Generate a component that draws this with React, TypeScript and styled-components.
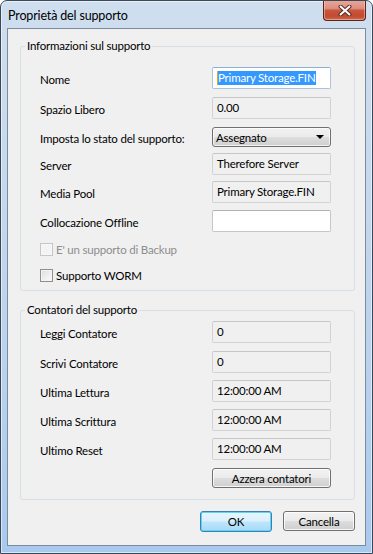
import React from "react";
import styled, { createGlobalStyle } from "styled-components";

const Global = createGlobalStyle`
  html, body { margin: 0; padding: 0; background: #ffffff; }
  body { font-family: Lato, "Open Sans", sans-serif; }
  * { box-sizing: border-box; }
`;

const Window = styled.div`
  width: 373px;
  height: 554px;
  border: 1px solid #3a4756;
  border-radius: 7px 7px 0 0;
  background: linear-gradient(to bottom, #cfdeef 0%, #c3d7ed 40%, #b3cfee 80%, #a8c9ee 100%);
  box-shadow: inset 0 0 0 1px rgba(255, 255, 255, 0.55);
  display: flex;
  flex-direction: column;
  padding: 0 6px 7px 6px;
  font-family: Lato, "Open Sans", sans-serif;
  font-size: 11.5px;
  letter-spacing: -0.2px;
  color: #000;
  overflow: hidden;
`;

const TitleBar = styled.div`
  height: 27px;
  display: flex;
  align-items: center;
  justify-content: space-between;
`;

const Title = styled.span`
  padding-left: 1px;
  font-size: 12.5px;
  letter-spacing: -0.15px;
  color: #000;
  margin-top: 1px;
`;

const CloseButton = styled.div`
  align-self: flex-start;
  margin-top: -1px;
  width: 43px;
  height: 21px;
  border: 1px solid #5a2419;
  border-top: none;
  border-radius: 0 0 4px 4px;
  background: linear-gradient(to bottom, #e8a99c 0%, #dc8e7e 42%, #c9553d 52%, #c14a31 80%, #d06a4d 100%);
  box-shadow: inset 0 0 0 1px rgba(255, 220, 210, 0.45);
  display: flex;
  align-items: center;
  justify-content: center;
`;

const Client = styled.div`
  flex: 1;
  border: 1px solid #7d8c9c;
  background: #f0f0f0;
  padding: 9px 10px 0 12px;
  display: flex;
  flex-direction: column;
`;

const Group = styled.fieldset<{ $gapTop?: number; $padTop: number; $padBottom: number }>`
  margin: ${(p) => p.$gapTop ?? 0}px 0 0 0;
  padding: ${(p) => p.$padTop}px 22px ${(p) => p.$padBottom}px 19px;
  border: 1px solid #d5dfe5;
  border-radius: 3px;
  min-width: 0;
  display: flex;
  flex-direction: column;
`;

const Legend = styled.legend`
  margin-left: -15px;
  padding: 0 2px;
  line-height: 16px;
`;

const Row = styled.div<{ $gap?: number; $h?: number }>`
  display: flex;
  align-items: center;
  height: ${(p) => p.$h ?? 22}px;
  margin-top: ${(p) => p.$gap ?? 0}px;
`;

const Label = styled.span`
  width: 172px;
  flex: none;
  padding-top: 2px;
`;

const Field = styled.div<{ $editable?: boolean; $focused?: boolean }>`
  width: 119px;
  height: 22px;
  border: 1px solid ${(p) => (p.$focused ? "#a9c4dc" : p.$editable ? "#c6c6c6" : "#d2d2d2")};
  border-top-color: ${(p) => (p.$focused ? "#8eb0cf" : p.$editable ? "#b0b0b0" : "#c6c6c6")};
  border-radius: 2px;
  background: ${(p) => (p.$editable ? "#ffffff" : "#f0f0f0")};
  padding: 2px 0 0 4px;
  line-height: 15px;
  white-space: nowrap;
  overflow: hidden;
`;

const Selected = styled.span`
  background: #3399ff;
  color: #ffffff;
  padding: 0 1px 1px 0;
  border-left: 1px solid #e0a040;
`;

const Combo = styled.div`
  width: 119px;
  height: 20px;
  border: 1px solid #707070;
  border-radius: 3px;
  background: linear-gradient(to bottom, #f2f2f2 0%, #ebebeb 48%, #dddddd 52%, #cfcfcf 100%);
  box-shadow: inset 0 0 0 1px rgba(255, 255, 255, 0.7);
  display: flex;
  align-items: center;
  justify-content: space-between;
  padding: 0 6px 0 3px;
`;

const Arrow = styled.span`
  width: 0;
  height: 0;
  border-left: 4px solid transparent;
  border-right: 4px solid transparent;
  border-top: 4px solid #000;
`;

const CheckRow = styled.label<{ $gap: number; $disabled?: boolean }>`
  display: flex;
  align-items: center;
  gap: 3px;
  height: 16px;
  margin-top: ${(p) => p.$gap}px;
  color: ${(p) => (p.$disabled ? "#8d8d8d" : "#000")};
`;

const Box = styled.span<{ $disabled?: boolean }>`
  width: 13px;
  height: 13px;
  flex: none;
  border: 1px solid ${(p) => (p.$disabled ? "#c6c6c6" : "#8e8f8f")};
  background: ${(p) =>
    p.$disabled
      ? "#f4f4f4"
      : "linear-gradient(135deg, #dcdcdc 0%, #f0f0f0 60%, #fbfbfb 100%)"};
  box-shadow: inset 0 0 0 1px ${(p) => (p.$disabled ? "#f7f7f7" : "#f4f4f4")};
`;

const Button = styled.div<{ $width: number; $default?: boolean }>`
  width: ${(p) => p.$width}px;
  height: ${(p) => (p.$default ? 21 : 20)}px;
  border: 1px solid ${(p) => (p.$default ? "#3c7fb1" : "#707070")};
  border-radius: 3px;
  background: ${(p) =>
    p.$default
      ? "linear-gradient(to bottom, #eaf6fd 0%, #d9f0fc 48%, #bee6fd 52%, #a7d9f5 100%)"
      : "linear-gradient(to bottom, #f2f2f2 0%, #ebebeb 48%, #dddddd 52%, #cfcfcf 100%)"};
  box-shadow: inset 0 0 0 1px ${(p) => (p.$default ? "#5fd3f8" : "rgba(255,255,255,0.8)")};
  display: flex;
  align-items: center;
  justify-content: center;
  line-height: 15px;
`;

const FieldButtonRow = styled.div`
  display: flex;
  justify-content: flex-start;
  padding-left: 172px;
  margin-top: 8px;
`;

const Footer = styled.div`
  display: flex;
  justify-content: flex-end;
  gap: 11px;
  margin-top: 11px;
`;

const CloseGlyph = () => (
  <svg width="14" height="11" viewBox="0 0 14 11">
    <path d="M2.5 1.5 L11.5 9.5 M11.5 1.5 L2.5 9.5" stroke="#5b2a22" strokeWidth="4" strokeLinecap="round" />
    <path d="M2.5 1.5 L11.5 9.5 M11.5 1.5 L2.5 9.5" stroke="#ffffff" strokeWidth="2" strokeLinecap="round" />
  </svg>
);

export default function App() {
  return (
    <>
      <Global />
      <Window>
        <TitleBar>
          <Title>Proprietà del supporto</Title>
          <CloseButton>
            <CloseGlyph />
          </CloseButton>
        </TitleBar>
        <Client>
          <Group $padTop={13} $padBottom={7}>
            <Legend>Informazioni sul supporto</Legend>
            <Row>
              <Label>Nome</Label>
              <Field $editable $focused>
                <Selected>Primary Storage.FIN</Selected>
              </Field>
            </Row>
            <Row $gap={8}>
              <Label>Spazio Libero</Label>
              <Field>0.00</Field>
            </Row>
            <Row $gap={8} $h={20}>
              <Label>Imposta lo stato del supporto:</Label>
              <Combo>
                <span>Assegnato</span>
                <Arrow />
              </Combo>
            </Row>
            <Row $gap={6}>
              <Label>Server</Label>
              <Field>Therefore Server</Field>
            </Row>
            <Row $gap={6}>
              <Label>Media Pool</Label>
              <Field>Primary Storage.FIN</Field>
            </Row>
            <Row $gap={7}>
              <Label>Collocazione Offline</Label>
              <Field $editable />
            </Row>
            <CheckRow $gap={9} $disabled>
              <Box $disabled />
              E' un supporto di Backup
            </CheckRow>
            <CheckRow $gap={10}>
              <Box />
              Supporto WORM
            </CheckRow>
          </Group>
          <Group $gapTop={11} $padTop={3} $padBottom={11}>
            <Legend>Contatori del supporto</Legend>
            <Row>
              <Label>Leggi Contatore</Label>
              <Field>0</Field>
            </Row>
            <Row $gap={8}>
              <Label>Scrivi Contatore</Label>
              <Field>0</Field>
            </Row>
            <Row $gap={7}>
              <Label>Ultima Lettura</Label>
              <Field>12:00:00 AM</Field>
            </Row>
            <Row $gap={7}>
              <Label>Ultima Scrittura</Label>
              <Field>12:00:00 AM</Field>
            </Row>
            <Row $gap={7}>
              <Label>Ultimo Reset</Label>
              <Field>12:00:00 AM</Field>
            </Row>
            <FieldButtonRow>
              <Button $width={119}>Azzera contatori</Button>
            </FieldButtonRow>
          </Group>
          <Footer>
            <Button $width={72} $default>OK</Button>
            <Button $width={72} $default={false}>Cancella</Button>
          </Footer>
        </Client>
      </Window>
    </>
  );
}
